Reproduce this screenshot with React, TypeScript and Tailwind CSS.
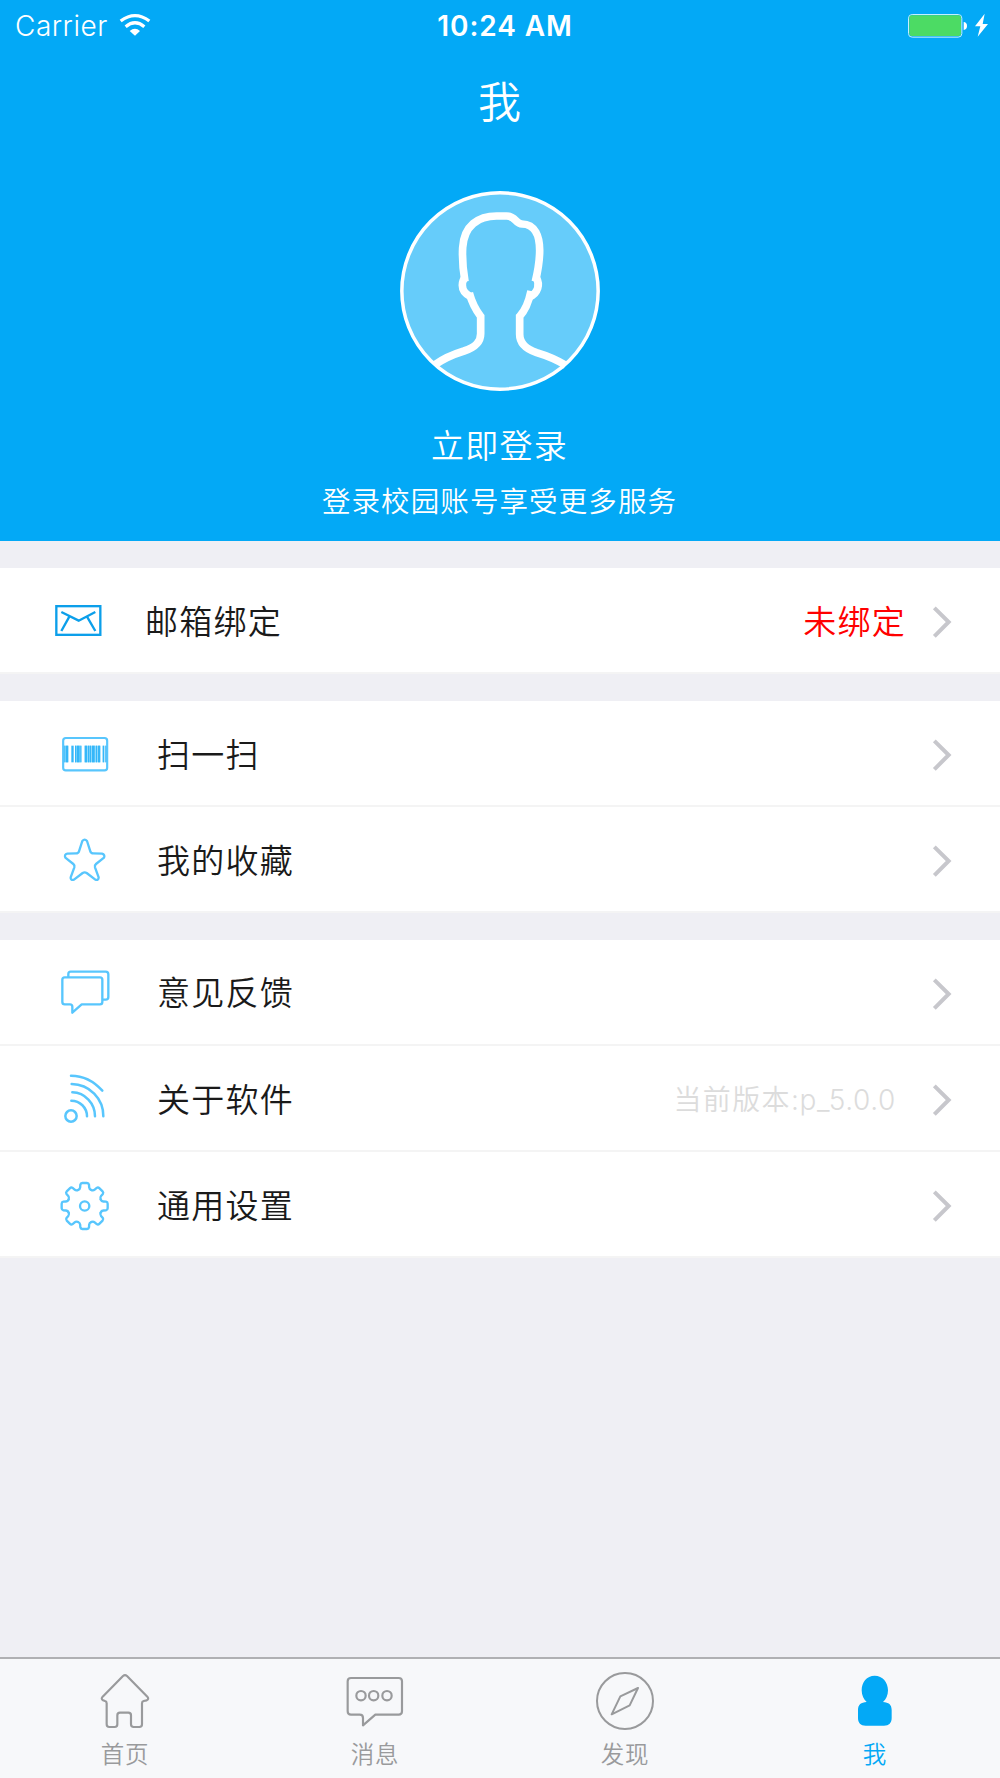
import React from 'react';
import clsx from 'clsx';

function WifiIcon() {
  return (
    <svg viewBox="360 36 96 72" className="-mt-px h-[24px] w-[32px]" fill="none" stroke="#fff" strokeWidth="10">
      <path d="M365 60 Q408 28 451 60" />
      <path d="M380 77 Q408 54 436 77" />
      <path d="M392 90 Q408 76 423 90 L408 104 Z" fill="#fff" stroke="none" />
    </svg>
  );
}

function BatteryIcon() {
  return (
    <svg viewBox="1221 36 246 75" className="-mt-px h-[25px] w-[82px]">
      <rect x="1225.5" y="40.500" width="160" height="68" rx="11" fill="none" stroke="#c5efff" strokeWidth="3" />
      <rect x="1228" y="43" width="155" height="62" rx="7" fill="#4cdb64" />
      <path d="M1391 63 Q1401 64 1401 75 Q1401 86 1391 87 Z" fill="#fff" />
      <path d="M1454 38 L1425 76 L1441 76 L1433 107 L1464 69 L1448 69 Z" fill="#fff" />
    </svg>
  );
}

function Avatar() {
  return (
    <svg viewBox="60 62 600 600" className="h-[200px] w-[200px]" fill="none">
      <circle cx="360" cy="362" r="294.500" fill="#66ccfa" />
      <g stroke="#fff" strokeWidth="23">
        <path d="M165 583 Q200 558 252 542 C288 530 302 514 302 490 L302 438 C288 420 276 398 268 368" />
        <path d="M272 379 C255 371 247 358 247 345 C247 335 249 328 255 322" />
        <path d="M255 334 C249 300 246 270 248 232 C252 165 295 137 350 137 L380 137 C407 137 406 161 426 161 C466 161 479 200 479 240 C479 275 473 305 466 334" />
        <path d="M469 322 C475 333 476 345 473 354 C469 366 462 375 449 379" />
        <path d="M453 362 C446 396 434 422 419 438 L419 492 C419 522 440 537 470 547 Q520 562 557 585" />
      </g>
      <circle cx="360" cy="362" r="294.500" stroke="#fff" strokeWidth="10.500" />
    </svg>
  );
}

function MailIcon() {
  return (
    <svg viewBox="163 129 147 99" className="mt-px h-[33px] w-[49px]" fill="none" stroke="#0c9fea" strokeWidth="7">
      <rect x="170" y="135.500" width="132" height="86" />
      <path d="M185 153 L237 179 L287 153 M209 167 L185 210 M262 167 L287 210" />
    </svg>
  );
}

const bars = [
  [191, 3], [197, 7], [214, 7], [225, 4], [231, 7], [239, 3], [254, 7], [264, 3],
  [269, 4], [276, 8], [288, 3], [294, 6], [308, 4], [316, 4],
];

function BarcodeIcon() {
  return (
    <svg viewBox="180 506 150 150" className="mt-0.5 size-[50px]" fill="none" stroke="#58c6fd" strokeWidth="6.500">
      <rect x="189.500" y="533" width="132" height="97" rx="8" />
      <rect x="191" y="556" width="15" height="50" fill="#8ddafd" stroke="none" />
      <rect x="225" y="556" width="21" height="50" fill="#8ddafd" stroke="none" />
      <rect x="254" y="556" width="48" height="50" fill="#8ddafd" stroke="none" />
      <rect x="308" y="556" width="12" height="50" fill="#b5e6fd" stroke="none" />
      {bars.map(([x, w]) => (
        <rect key={x} x={x} y="556" width={w} height="50" fill="#35b7f9" stroke="none" />
      ))}
    </svg>
  );
}

function StarIcon() {
  return (
    <svg viewBox="180 105 150 150" className="mt-0.5 size-[50px]" fill="none" stroke="#58c6fd" strokeWidth="7" strokeLinejoin="round">
      <path d="M247 123 Q254 115 261 123 L271 154 Q273 160 280 160 L306 161 Q316 164 312 173 L288 192 Q283 196 285 202 L296 232 Q296 242 286 239 L260 219 Q254 215 248 219 L222 239 Q211 242 212 232 L223 202 Q225 196 220 192 L196 173 Q192 163 202 161 L228 160 Q235 160 237 154 Z" />
    </svg>
  );
}

function FeedbackIcon() {
  return (
    <svg viewBox="180 503 150 150" className="size-[50px]" fill="none" stroke="#58c6fd" strokeWidth="7" strokeLinejoin="round">
      <path d="M194 534 H300 Q307 534 307 541 V608 Q307 615 300 615 H245 L217 640 V622 Q217 615 210 615 H194 Q187 615 187 608 V541 Q187 534 194 534 Z" />
      <path d="M205 533 V524 Q205 517 212 517 H317 Q325 517 325 525 V593 Q325 601 317 601 H309" />
    </svg>
  );
}

function AboutIcon() {
  return (
    <svg viewBox="180 131 150 150" className="mt-px size-[50px]" fill="none" stroke="#58c6fd" strokeWidth="7.500" strokeLinecap="round">
      <circle cx="213" cy="260" r="17" />
      <path d="M213 139 Q267 139 307 184" />
      <path d="M215 164 A96 96 0 0 1 310 261" />
      <path d="M217 189 A70 72 0 0 1 285 261" />
      <path d="M214 214 A47 47 0 0 1 261 261" />
    </svg>
  );
}

const toothAngles = [0, 45, 90, 135, 180, 225, 270, 315];

function GearIcon() {
  return (
    <svg viewBox="-74 -75 150 150" className="mt-[3px] size-[50px]" fill="none" stroke="#58c6fd" strokeWidth="7" strokeLinecap="round">
      <circle r="14" />
      {toothAngles.map((a) => (
        <path
          key={a}
          transform={`rotate(${a})`}
          d="M-20 -48 Q-14 -50 -13.500 -56 L-13 -64 Q-12 -69 -7 -69 L7 -69 Q12 -69 13 -64 L13.500 -56 Q14 -50 20 -48"
        />
      ))}
    </svg>
  );
}

function Chevron() {
  return (
    <svg viewBox="756 138 60 96" className="mt-1 h-[32px] w-[20px]" fill="none" stroke="#c7c7cc" strokeWidth="12">
      <path d="M763 143.500 L806 186 L763 229" />
    </svg>
  );
}

function HomeIcon() {
  return (
    <svg viewBox="105 63 180 180" className="size-[60px]" fill="none" stroke="currentColor" strokeWidth="6.500" strokeLinejoin="round">
      <path d="M189 78 Q195 73 201 78 L262 140 Q268 147 260 151 L251 153 Q246 154 246 160 V223 Q246 231 238 231 H221 Q213 231 213 223 V196 Q213 188 205 188 H180 Q172 188 172 196 V223 Q172 231 164 231 H148 Q140 231 140 223 V160 Q140 154 135 153 L129 151 Q122 147 128 140 Z" />
    </svg>
  );
}

function MessageIcon() {
  return (
    <svg viewBox="855 63 180 180" className="size-[60px]" fill="none" stroke="currentColor" strokeWidth="6.500" strokeLinejoin="round">
      <path d="M873 84 H1016 Q1026 84 1026 94 V184 Q1026 194 1016 194 H946 L909 226 V204 Q909 194 899 194 H873 Q863 194 863 184 V94 Q863 84 873 84 Z" />
      <circle cx="903" cy="137" r="14" />
      <circle cx="941" cy="137" r="14" />
      <circle cx="981" cy="137" r="14" />
    </svg>
  );
}

function CompassIcon() {
  return (
    <svg viewBox="105 63 180 180" className="size-[60px]" fill="none" stroke="currentColor" strokeWidth="6" strokeLinejoin="round">
      <circle cx="195" cy="153" r="84" />
      <path d="M234 114 L181 139 L155 193 L209 166 Z" />
    </svg>
  );
}

function MeIcon() {
  return (
    <svg viewBox="855 63 180 180" className="size-[60px]" fill="currentColor">
      <path d="M944 77 C968 77 984 97 984 121 C984 136 978 148 969 156 C986 157 995 164 995 180 V204 C995 219 987 227 972 227 H917 C902 227 894 219 894 204 V180 C894 164 903 157 920 156 C911 148 905 136 905 121 C905 97 920 77 944 77 Z" />
    </svg>
  );
}

const groups = [
  [{ label: '扫一扫', icon: <BarcodeIcon /> }, { label: '我的收藏', icon: <StarIcon /> }],
  [
    { label: '意见反馈', icon: <FeedbackIcon /> },
    { label: '关于软件', icon: <AboutIcon />, version: 'p_5.0.0' },
    { label: '通用设置', icon: <GearIcon /> },
  ],
];

const tabs = [
  { label: '首页', icon: <HomeIcon /> },
  { label: '消息', icon: <MessageIcon /> },
  { label: '发现', icon: <CompassIcon /> },
  { label: '我', icon: <MeIcon />, active: true },
];

export default function App() {
  return (
    <div className="flex h-[1778px] w-[1000px] flex-col overflow-hidden bg-[#efeff4] font-['Inter','Noto_Sans_CJK_SC',sans-serif] font-[350] text-[#1a1a1a]">
      {/* Header */}
      <header className="flex h-[541.300px] shrink-0 flex-col items-center bg-[#03a9f6] text-white">
        <div className="grid h-[50px] w-full grid-cols-3 items-center pt-px pr-[11px] pl-[15px]">
          <div className="flex items-center gap-[11px]">
            <span className="text-[28px] font-[350] tracking-[0.500px]">Carrier</span>
            <WifiIcon />
          </div>
          <span className="pl-[6px] text-center text-[28px] font-semibold tracking-[0.900px]">10:24 AM</span>
          <div className="flex justify-end">
            <BatteryIcon />
          </div>
        </div>
        <h1 className="mt-[22px] mr-px text-[43px] leading-[60px] font-[350]">我</h1>
        <div className="mt-[59px]">
          <Avatar />
        </div>
        <p className="mt-[31px] mr-px text-[33px] leading-[48px] tracking-[1.250px]">立即登录</p>
        <p className="mt-[12px] mr-px text-[28.500px] leading-[40px] tracking-[1.100px]">登录校园账号享受更多服务</p>
      </header>

      {/* Menu */}
      <main className="flex flex-1 flex-col gap-[26.600px] pt-[26.600px]">
        <div className="flex h-[106.200px] items-center border-b-2 border-[#f4f4f4] bg-white pr-[48px] pl-[54px]">
          <MailIcon />
          <span className="mt-[5px] ml-[42px] text-[33px] tracking-[1.250px]">邮箱绑定</span>
          <span className="mt-[5px] mr-[26px] ml-auto text-[33px] tracking-[1.250px] text-[#ff0000]">未绑定</span>
          <Chevron />
        </div>
        {groups.map((rows, i) => (
          <div key={i}>
            {rows.map((row) => (
              <div key={row.label} className="flex h-[106.200px] items-center border-b-2 border-[#f4f4f4] bg-white pr-[48px] pl-[60px]">
                {row.icon}
                <span className="mt-[5px] ml-[47px] text-[33px] tracking-[1.250px]">{row.label}</span>
                {row.version && (
                  <span className="mt-[4px] mr-[36px] ml-auto text-[28px] tracking-[1.400px] text-[#dcdcdc]">
                    当前版本<span className="tracking-[0.600px]">:{row.version}</span>
                  </span>
                )}
                <div className={row.version ? '' : 'ml-auto'}>
                  <Chevron />
                </div>
              </div>
            ))}
          </div>
        ))}
      </main>

      {/* Tab bar */}
      <nav className="grid h-[121px] shrink-0 grid-cols-4 border-t-2 border-[#b0b0b3] bg-[#f7f8fa]">
        {tabs.map((tab) => (
          <div
            key={tab.label}
            className={clsx('flex flex-col items-center pt-[12px]', tab.active ? 'text-[#03a9f6]' : 'text-[#999a9c]')}
          >
            {tab.icon}
            <span className="mt-[8px] text-[23.500px] leading-[32px] tracking-[0.800px]">{tab.label}</span>
          </div>
        ))}
      </nav>
    </div>
  );
}
